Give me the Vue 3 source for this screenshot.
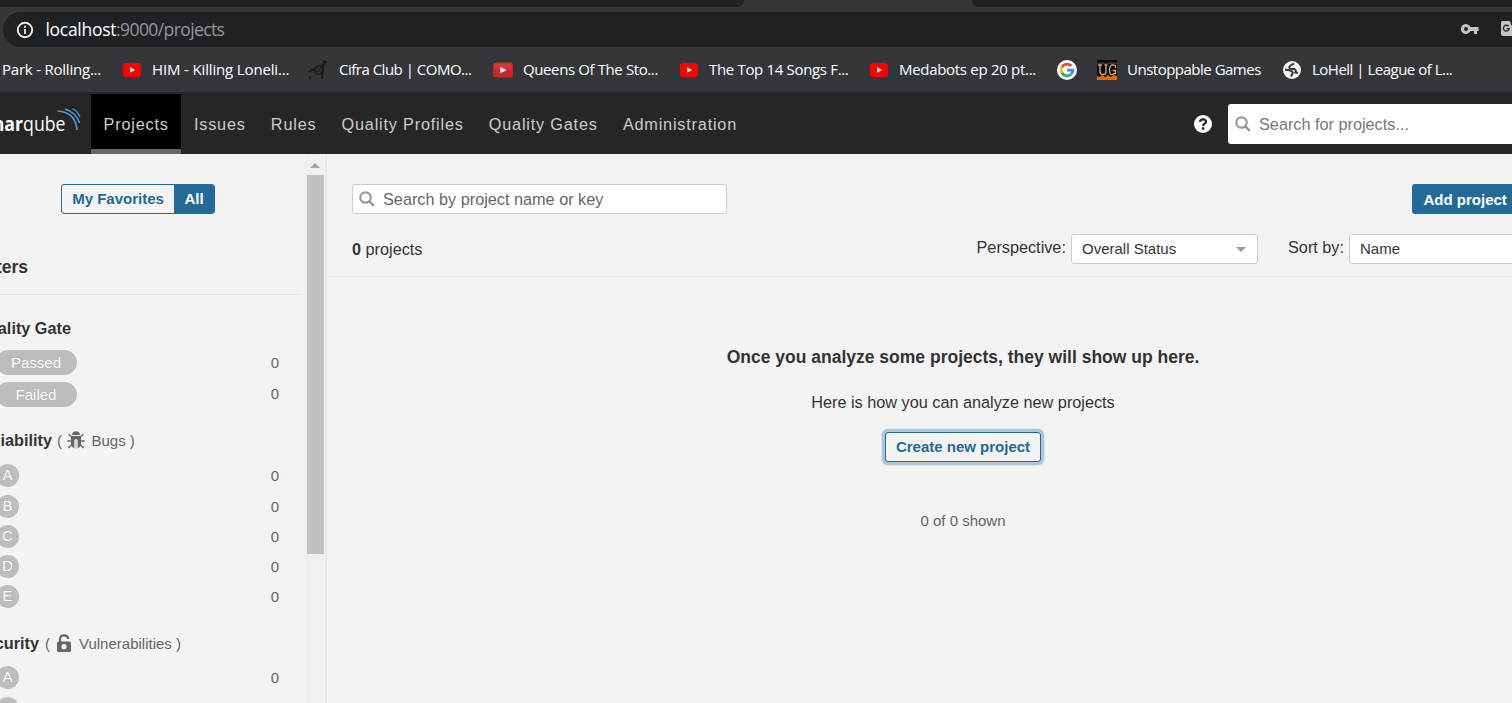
<script setup>
const bookmarks = [
  { text: 'Park - Rolling...', icon: '', w: 120, ls: -0.22 },
  { text: 'HIM - Killing Loneli...', icon: 'yt', w: 186, ls: -0.15 },
  { text: 'Cifra Club | COMO...', icon: 'cifra', w: 185, ls: -0.5 },
  { text: 'Queens Of The Sto...', icon: 'ytold', w: 186, ls: -0.39 },
  { text: 'The Top 14 Songs F...', icon: 'yt', w: 190, ls: -0.33 },
  { text: 'Medabots ep 20 pt...', icon: 'yt', w: 188, ls: -0.3 },
  { text: '', icon: 'google', w: 40, ls: 0 },
  { text: 'Unstoppable Games', icon: 'ug', w: 185, ls: -0.5 },
  { text: 'LoHell | League of L...', icon: 'globe', w: 200, ls: -0.5 }
]
const nav = ['Projects', 'Issues', 'Rules', 'Quality Profiles', 'Quality Gates', 'Administration']
const ratings = ['A', 'B', 'C', 'D', 'E']
</script>

<template>
  <div class="window">
    <div class="tabs"><div class="tab left"></div><div class="tab right"></div></div>
    <div class="address">
      <div class="omnibox">
        <svg class="info" width="18" height="18" viewBox="0 0 18 18"><circle cx="9" cy="9" r="7.2" fill="none" stroke="#e8eaed" stroke-width="1.9" /><path d="M9 8v5M9 4.7v2" stroke="#e8eaed" stroke-width="1.9" /></svg>
        <span class="url"><span class="host">localhost</span><span class="path">:9000/projects</span></span>
        <svg class="key" width="18" height="12" viewBox="0 0 18 12"><path fill="#c4c5c7" fill-rule="evenodd" d="M9.500 4A5 5 0 1 0 9.500 8H13v3h3V8h1.500V4ZM5 4a2 2 0 1 1 0 4a2 2 0 0 1 0-4Z" /></svg>
        <svg class="translate" width="20" height="20" viewBox="0 0 20 20"><path d="M9 5h10v13H12z" fill="#8d8f92" /><path d="M2 1h7l4 15H2Q0 16 0 14V3Q0 1 2 1Z" fill="#c4c5c7" /><path d="M7.600 6.300A2.900 2.900 0 1 0 8.200 8.600H5.700" fill="none" stroke="#28292c" stroke-width="1.4" /></svg>
      </div>
    </div>
    <div class="bookmarks">
      <div v-for="b in bookmarks" :key="b.text" class="bookmark" :class="b.icon" :style="{ width: b.w + 'px' }">
        <svg v-if="b.icon" width="20" height="20" viewBox="0 0 20 20">
          <template v-if="b.icon === 'yt'"><rect x="1" y="3" width="18" height="14" rx="3" fill="#f00" /><path d="M8 7.200l5 2.800-5 2.800z" fill="#fff" /></template>
          <template v-else-if="b.icon === 'ytold'"><rect x="0" y="2.500" width="20" height="15" rx="2.500" fill="#c9252b" /><rect x="1" y="3.500" width="18" height="6" rx="1.500" fill="#d8363a" /><path d="M7.300 7l6 3.200-6 3z" fill="#fff" /></template>
          <template v-else-if="b.icon === 'cifra'"><path d="M.500 12l5-2.500 2 1.500M18.500 1L12 8.500M14.500 1.500h4M15 5l-1 14M2 16.500v3" fill="none" stroke="#151617" stroke-width="1.500" /><ellipse cx="11" cy="10" rx="4.500" ry="4" fill="none" stroke="#151617" stroke-width="1.300" transform="rotate(-40 11 10)" /><circle cx="10.500" cy="10.500" r="1.500" fill="none" stroke="#151617" /></template>
          <template v-else-if="b.icon === 'google'"><circle cx="10" cy="10" r="10" fill="#fff" /><g fill="none" stroke-width="2.800"><path d="M4.900 7.200A5.900 5.900 0 0 1 14.300 6" stroke="#ea4335" /><path d="M4.900 12.800A5.900 5.900 0 0 1 4.900 7.200" stroke="#fbbc05" /><path d="M13.800 14.500A5.900 5.900 0 0 1 4.900 12.800" stroke="#34a853" /><path d="M10 10.200H15.900A5.900 5.900 0 0 1 13.800 14.500" stroke="#4285f4" /></g></template>
          <template v-else-if="b.icon === 'ug'"><rect width="20" height="20" fill="#0b0c11" /><path d="M0 3l5-1 5 1 5-1 5 1v1H0z" fill="#5b2b1a" /><path d="M0 20v-4l3 1 2-2 3 2 3-2 3 2 3-2 3 1v4z" fill="#dc6a0e" /><path d="M1 5h4M3 5v7q0 2.500 3 2.500t3-2.500V5M7.500 5h3M18.500 8V5.500q-6-2-6 4t2.500 5 3.500-1v-3h-3" fill="none" stroke="#d9a673" stroke-width="1.300" /></template>
          <template v-else><circle cx="10" cy="10" r="9" fill="#f1f3f4" /><path d="M12 3.500L8.500 5.500Q6 8 8.500 8.800L12.500 9Q14.500 10.500 13.500 12.500L16 13" fill="none" stroke="#35363a" stroke-width="2" /><path d="M3 9.500L8.500 10.500Q11.500 12 10.500 13.500L9 16.500" fill="none" stroke="#35363a" stroke-width="2" /></template>
        </svg>
        <span v-if="b.text" :style="{ letterSpacing: b.ls + 'px' }">{{ b.text }}</span>
      </div>
    </div>

    <header class="navbar">
      <svg class="logo" width="91" height="62" viewBox="0 0 91 62">
        <text x="-27" y="38.500" textLength="92.500" lengthAdjust="spacingAndGlyphs"><tspan class="logo-bold">sonar</tspan><tspan class="logo-light">qube</tspan></text>
        <g fill="none" stroke="#4a9bd1"><path d="M57.500 19Q75.500 20 77 38" stroke-width="1.700" /><path d="M65 17Q75.500 20 79.700 31" stroke-width="1.400" /><path d="M72.500 16.500Q77.500 19 80 25" stroke-width="1.200" /></g>
      </svg>
      <nav><a v-for="(n, i) in nav" :key="n" :class="{ active: i === 0 }">{{ n }}</a></nav>
      <svg class="help" width="18" height="18" viewBox="0 0 18 18"><circle cx="9" cy="9" r="9" fill="#fff" /><path d="M6 6.800Q6.200 4.300 9 4.300T12 6.800Q12 8 10.500 8.800 9.200 9.500 9.200 11" fill="none" stroke="#262626" stroke-width="2.300" /><rect x="7.900" y="12.200" width="2.500" height="2.500" fill="#262626" /></svg>
      <div class="global-search">
        <svg width="16" height="16" viewBox="0 0 16 16"><circle cx="6.500" cy="6.500" r="5.200" fill="none" stroke="#999" stroke-width="2.200" /><path d="M10.300 10.300l4.500 4.500" stroke="#999" stroke-width="2.500" /></svg>
        <span>Search for projects...</span>
      </div>
    </header>

    <div class="body">
      <aside>
        <div class="toggle"><button>My Favorites</button><button class="on">All</button></div>
        <div class="filters-title"><b>Filters</b></div>
        <section class="gate">
          <h3><span class="clip">Quality Gate</span></h3>
          <div class="row pillrow"><span class="pill">Passed</span><span class="count">0</span></div>
          <div class="row pillrow second"><span class="pill">Failed</span><span class="count">0</span></div>
        </section>
        <section class="rel">
          <h3><span class="clip">Reliability</span><span class="sub">(</span>
            <svg class="bug" width="18" height="18" viewBox="0 0 18 18"><path d="M5 4Q5.500 .300 9 .300T13 4Z" fill="#666" /><path d="M4 5h10v7q0 4-3.300 5.200V9.500Q10.700 8 9 8T7.300 9.500v7.700Q4 16 4 12z" fill="#666" /><path d="M8.400 9h1.200v8.500H8.400z" fill="#bbb" /><path d="M1.500 3l3 3M16.500 3l-3 3M.300 10h4M13.700 10h4M1.500 17l3.300-3.300M16.500 17l-3.300-3.300" stroke="#666" stroke-width="1.500" fill="none" /></svg>
            <span class="sub name">Bugs )</span></h3>
          <div v-for="r in ratings" :key="r" class="row rating"><span class="circle">{{ r }}</span><span class="count">0</span></div>
        </section>
        <section class="sec">
          <h3><span class="clip">Security</span><span class="sub">(</span>
            <svg class="lock" width="14" height="18" viewBox="0 0 14 18"><path d="M3 8V5.500Q3 1.300 7 1.300T11.200 5" fill="none" stroke="#666" stroke-width="2.200" /><path fill="#666" fill-rule="evenodd" d="M1.500 7.500h11Q14 7.500 14 9v7.500Q14 18 12.500 18h-11Q0 18 0 16.500V9Q0 7.500 1.500 7.500ZM7 10.100a2.600 2.600 0 1 0 0 5.200a2.600 2.600 0 0 0 0-5.200Z" /></svg>
            <span class="sub name">Vulnerabilities )</span></h3>
          <div v-for="r in ratings.slice(0, 2)" :key="r" class="row rating"><span class="circle">{{ r }}</span><span class="count">0</span></div>
        </section>
      </aside>
      <div class="scrollbar"><div class="up"></div><div class="thumb"></div></div>
      <main>
        <div class="top">
          <div class="search">
            <svg width="16" height="16" viewBox="0 0 16 16"><circle cx="6.500" cy="6.500" r="5.200" fill="none" stroke="#999" stroke-width="2.200" /><path d="M10.300 10.300l4.500 4.500" stroke="#999" stroke-width="2.500" /></svg>
            <span>Search by project name or key</span>
          </div>
          <button class="add">Add project</button>
        </div>
        <div class="controls">
          <span class="total"><b>0</b> projects</span>
          <label class="persp">Perspective:</label>
          <div class="select"><span>Overall Status</span><i></i></div>
          <label class="sort">Sort by:</label>
          <div class="select last"><span>Name</span></div>
        </div>
        <div class="empty">
          <h2>Once you analyze some projects, they will show up here.</h2>
          <p>Here is how you can analyze new projects</p>
          <button>Create new project</button>
          <small>0 of 0 shown</small>
        </div>
      </main>
    </div>
  </div>
</template>

<style>
html, body { margin: 0; overflow: hidden; }
</style>
<style scoped>
* { box-sizing: border-box; }
.window { width: 1512px; height: 703px; overflow: hidden; display: flex; flex-direction: column; background: #f3f3f3; color: #333; font: 16.25px/20px "Liberation Sans", Arial, sans-serif; white-space: nowrap; }
svg { flex: none; display: block; }
button { font: bold 15px/18px "Liberation Sans", Arial, sans-serif; margin: 0; }
.tabs { height: 7px; flex: none; display: flex; justify-content: space-between; background: #35363a; }
.tab { background: #202124; }
.left { width: 744px; border-bottom-right-radius: 7px; }
.right { width: 540px; border-bottom-left-radius: 7px; }
.address { flex: none; height: 40px; padding: 5px 0 0 3px; background: #35363a; }
.omnibox { height: 35px; background: #202124; border-radius: 18px 0 0 18px; display: flex; align-items: center; padding-left: 13px; }
.url { margin-left: 11.5px; font: 17.5px/24px "Open Sans", sans-serif; width: 1415.5px; flex: none; padding-bottom: 2px; }
.host { color: #fff; letter-spacing: -.3px; }
.path { color: #95979a; letter-spacing: -.6px; }
.key { margin-top: -1px; }
.translate { margin-left: 22px; }
.bookmarks { flex: none; height: 45px; background: #35363a; display: flex; align-items: center; padding-left: 2px; }
.bookmark { flex: none; display: flex; align-items: center; gap: 10px; color: #fff; font: 15px/20px "Open Sans", sans-serif; }
.bookmark span { padding-bottom: 2px; }
.bookmark.cifra { gap: 11px; }
.navbar { flex: none; height: 62px; background: #262626; display: flex; }
.logo { overflow: hidden; fill: #fff; font-family: "Open Sans", sans-serif; font-size: 20px; }
.logo-bold { font-weight: 700; }
.logo-light { font-weight: 400; }
nav { display: flex; padding-top: 2px; width: 1103px; flex: none; }
nav a { height: 60px; padding: 20px 12.6px 0; line-height: 20px; color: #ccc; letter-spacing: .8px; }
nav a.active { background: #000; border-bottom: 5px solid #666; }
.help { margin-top: 23px; }
.global-search { margin: 12px 0 0 16px; width: 284px; flex: none; height: 40px; background: #fff; border-radius: 3px 0 0 3px; display: flex; align-items: center; padding-left: 7px; gap: 8px; color: #777; }
.body { flex: 1; min-height: 0; display: flex; }
aside { width: 305px; overflow: hidden; flex: none; padding-top: 30px; }
.toggle { display: flex; margin-left: 61px; height: 30px; width: 154px; border: 1px solid #236a97; border-radius: 3px; overflow: hidden; }
.toggle button { border: 0; background: transparent; color: #236a97; padding: 0; width: 112px; }
.toggle .on { background: #236a97; color: #fff; flex: 1; }
.filters-title { margin-top: 13px; height: 68px; width: 301px; border-bottom: 1px solid #e6e6e6; padding-top: 30px; display: flex; font-size: 17.5px; }
.filters-title b { width: 28px; display: flex; justify-content: flex-end; }
h3 { margin: 0; font: bold 16.25px/20px "Liberation Sans", Arial, sans-serif; height: 20px; display: flex; align-items: center; }
.clip { display: flex; justify-content: flex-end; flex: none; }
.sub { color: #666; font: 15px/20px "Liberation Sans", Arial, sans-serif; padding-top: 1px; }
.gate { padding-top: 23px; }
.gate .clip { width: 71px; }
.row { display: flex; justify-content: space-between; align-items: center; padding-right: 26px; margin-left: -4px; }
.count { color: #666; font-size: 15px; }
.pillrow { height: 25px; margin-top: 12px; }
.pillrow.second { margin-top: 7px; }
.second .count { margin-top: -2px; }
.pill { width: 81px; height: 25px; border-radius: 13px; background: #bdbdbd; color: #fff; font-size: 15px; line-height: 26px; text-align: center; padding-right: 1px; text-shadow: 0 0 1px #999; }
.rel { padding-top: 23px; }
.rel .clip { width: 52px; }
.rel .sub { margin-left: 5px; }
.bug { margin-left: 5px; }
.rel .name { margin-left: 6.5px; }
.rating { height: 23px; margin-top: 7px; }
h3 + .rating { margin-top: 14px; margin-bottom: 8px; }
.circle { width: 23px; height: 23px; border-radius: 50%; background: #bdbdbd; color: #fff; font-size: 15px; line-height: 22px; text-align: center; text-shadow: 0 0 1px #999; }
.sec { padding-top: 25px; }
.sec .clip { width: 39px; }
.sec .sub { margin-left: 6px; }
.lock { margin-left: 7px; }
.sec .name { margin-left: 8px; }
.sec h3 + .rating { margin-top: 13px; }
.scrollbar { width: 22px; flex: none; background: #f0f0f0; border-right: 1px solid #e6e6e6; padding-left: 2px; }
.up { margin: 9px 0 0 3px; width: 0; border: 5px solid transparent; border-top: 0; border-bottom-color: #a3a3a3; }
.thumb { margin-top: 7px; width: 17px; height: 379px; background: #c1c1c1; }
main { flex: 1; min-width: 0; overflow: hidden; }
.top { display: flex; padding: 30px 0 0 25px; }
.search { width: 375px; height: 30px; background: #fff; border: 1px solid #ccc; border-radius: 3px; display: flex; align-items: center; padding-left: 6px; gap: 8px; color: #666; margin-right: 685px; flex: none; }
.add { width: 120px; flex: none; height: 30px; background: #236a97; border: 0; color: #fff; border-radius: 3px 0 0 3px; text-align: left; padding: 2px 0 0 11.5px; }
.controls { display: flex; height: 63px; padding: 20px 0 0 25px; border-bottom: 1px solid #e6e6e6; }
.total { width: 624.5px; flex: none; padding-top: 5px; }
.persp { width: 94.5px; padding-top: 3px; flex: none; }
.select { width: 187px; flex: none; height: 30px; border: 1px solid #ccc; border-radius: 3px; background: #fff; font-size: 15px; line-height: 28px; padding: 0 11px 0 10px; display: flex; justify-content: space-between; align-items: center; }
.select i { border: 5px solid transparent; border-top-color: #999; border-bottom: 0; }
.sort { margin-left: 30px; width: 61px; flex: none; padding-top: 3px; }
.empty { width: 1272px; display: flex; flex-direction: column; align-items: center; padding-top: 70px; }
h2 { margin: 0; font: bold 17.5px/20px "Liberation Sans", Arial, sans-serif; }
p { margin: 25px 0 0; }
.empty button { margin-top: 20px; width: 156px; height: 30px; background: #f3f3f3; border: 1px solid #236a97; border-radius: 3px; color: #236a97; padding: 0; box-shadow: 0 0 0 3px rgba(35, 106, 151, .25), 0 0 0 4px rgba(35, 106, 151, .1); }
small { margin-top: 49px; font-size: 15px; color: #666; }
</style>
